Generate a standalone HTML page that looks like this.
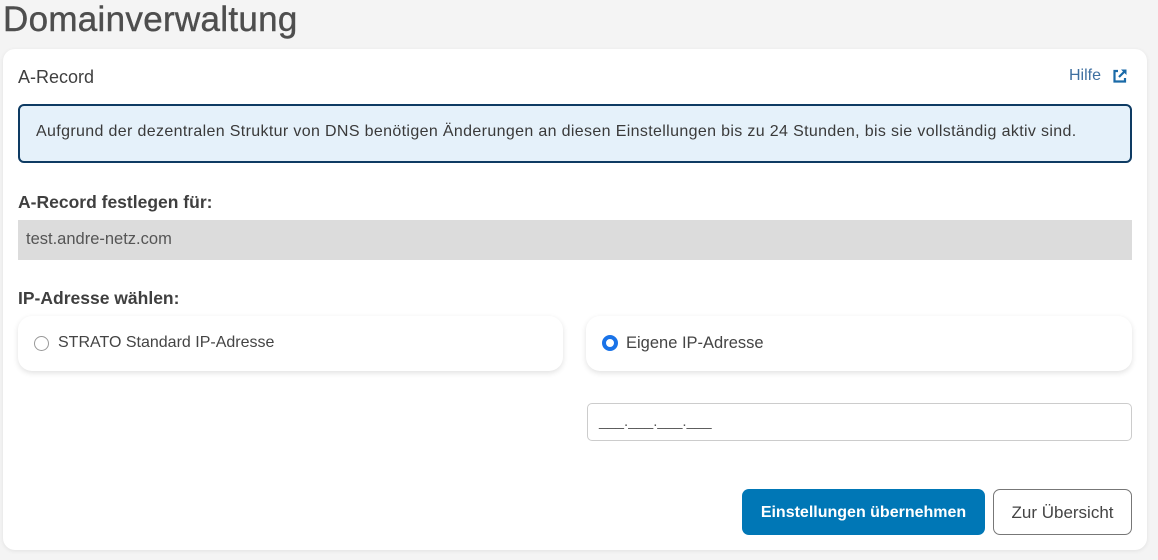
<!DOCTYPE html>
<html><head><meta charset="utf-8"><style>
*{box-sizing:border-box;margin:0;padding:0}
body{width:1158px;height:560px;background:#f4f4f4;font-family:"Liberation Sans",sans-serif;color:#444;position:relative;overflow:hidden}
.a{position:absolute}
h1{position:absolute;left:3px;top:0px;font-size:35px;font-weight:normal;color:#4e4e4e;letter-spacing:0.3px;-webkit-text-stroke:0.4px #4e4e4e}
.card{left:3px;top:49px;width:1144px;height:501px;background:#fff;border-radius:12px;box-shadow:0 1px 4px rgba(0,0,0,.08)}
.lbl{font-size:17.5px;color:#3f3f3f;font-weight:bold}
.info{left:18px;top:104px;width:1114px;height:59px;background:#e5f1fa;border:2px solid #0e3b63;border-radius:6px;font-size:16px;letter-spacing:0.35px;color:#3a3a3a;padding:17px 0 0 16px;white-space:nowrap}
.grey{left:18px;top:220px;width:1114px;height:40px;background:#dcdcdc;font-size:16.5px;color:#555;padding:10px 0 0 8px}
.opt{height:55px;background:#fff;border-radius:14px;box-shadow:0 2px 6px rgba(0,0,0,.12);font-size:16px;color:#444}
.btn1{left:742px;top:489px;width:243px;height:46px;background:#0077b6;border-radius:7px;color:#fff;font-size:16px;font-weight:bold;text-align:center;line-height:48px}
.btn2{left:993px;top:489px;width:139px;height:46px;border:1px solid #777;border-radius:7px;color:#444;font-size:17px;text-align:center;line-height:46px}
</style></head><body>
<h1>Domainverwaltung</h1>
<div class="a card"></div>
<div class="a" style="left:18px;top:67px;font-size:18px;color:#3f3f3f">A-Record</div>
<div class="a" style="left:1069px;top:67px;font-size:16px;color:#3e6fa0">Hilfe</div>
<svg class="a" style="left:1112px;top:68px" width="16" height="16" viewBox="0 0 16 16"><path d="M6 3H2.5v10.5H13V10" fill="none" stroke="#1a6aa8" stroke-width="2.2"/><path d="M9 1.5h5.5V7z" fill="#1a6aa8"/><path d="M13.5 2.5L7 9" stroke="#1a6aa8" stroke-width="2.2"/></svg>
<div class="a info">Aufgrund der dezentralen Struktur von DNS benötigen Änderungen an diesen Einstellungen bis zu 24 Stunden, bis sie vollständig aktiv sind.</div>
<div class="a lbl" style="left:18px;top:192px">A-Record festlegen für:</div>
<div class="a grey">test.andre-netz.com</div>
<div class="a lbl" style="left:18px;top:288px">IP-Adresse wählen:</div>
<div class="a opt" style="left:18px;top:316px;width:545px">
 <div class="a" style="left:16px;top:20px;width:15px;height:15px;border:1px solid #999;border-radius:50%"></div>
 <div class="a" style="left:40px;top:18px;font-size:16px">STRATO Standard IP-Adresse</div>
</div>
<div class="a opt" style="left:586px;top:316px;width:546px">
 <div class="a" style="left:16px;top:19px;width:16px;height:16px;border:4.5px solid #1a73e8;border-radius:50%"></div>
 <div class="a" style="left:40px;top:18px;font-size:16.5px">Eigene IP-Adresse</div>
</div>
<div class="a" style="left:587px;top:403px;width:545px;height:38px;border:1px solid #ccc;border-radius:5px;font-size:15px;color:#555;padding:9px 0 0 11px">___.___.___.___</div>
<div class="a btn1">Einstellungen übernehmen</div>
<div class="a btn2">Zur Übersicht</div>
</body></html>
